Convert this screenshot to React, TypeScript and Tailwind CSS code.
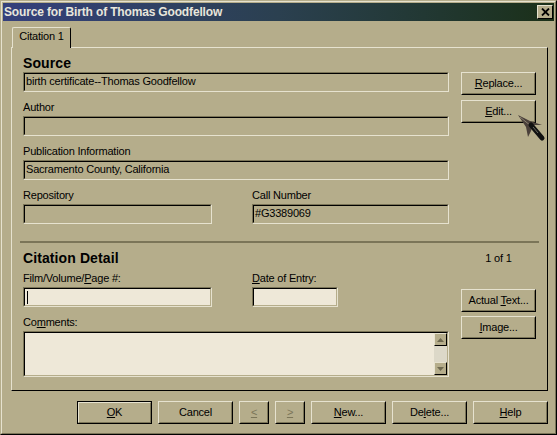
import type { ReactNode } from 'react';

const fontStack = "font-['Liberation_Sans',Arial,sans-serif]";

function Field({ value, light, className, children }: { value?: string; light?: boolean; className?: string; children?: ReactNode }) {
	return (
		<div className={`border border-t-[#7b7558] border-l-[#7b7558] border-b-[#e6e2cf] border-r-[#e6e2cf] ${className}`}>
			<div className={`relative h-full border border-t-black border-l-black border-b-[#b5ad8b] border-r-[#b5ad8b] pl-[1px] text-[11px] leading-[15px] ${light ? 'bg-[#eee8d8]' : ''}`}>
				{value}
				{children}
			</div>
		</div>
	);
}

function Btn({ children, className, isDefault }: { children: ReactNode; className?: string; isDefault?: boolean }) {
	if (isDefault) {
		return (
			<div className={`h-[23px] border border-black ${className}`}>
				<div className="flex h-full items-center justify-center border border-t-[#e6e2cf] border-l-[#e6e2cf] border-b-[#7b7558] border-r-[#7b7558] text-[11px]">{children}</div>
			</div>
		);
	}
	return (
		<div className={`h-[23px] border border-t-[#e6e2cf] border-l-[#e6e2cf] border-b-black border-r-black ${className}`}>
			<div className="flex h-full items-center justify-center border border-transparent border-b-[#7b7558] border-r-[#7b7558] text-[11px]">{children}</div>
		</div>
	);
}

function Label({ children, className }: { children: ReactNode; className?: string }) {
	return <div className={`h-[14px] text-[11px] leading-[14px] mb-[2px] ${className}`}>{children}</div>;
}

function ScrollBtn({ down }: { down?: boolean }) {
	return (
		<div className="flex h-[13px] w-[13px] items-center justify-center border border-t-[#e6e2cf] border-l-[#e6e2cf] border-b-black border-r-black bg-[#b5ad8b]">
			<svg width="7" height="4" viewBox="0 0 7 4">
				<polygon points={down ? '0,0 7,0 3.5,4' : '3.5,0 7,4 0,4'} fill="#6e6950" />
			</svg>
		</div>
	);
}

export default function App() {
	return (
		<div className={`${fontStack} relative h-[435px] w-[557px] overflow-hidden bg-[#b5ad8b] tracking-[-0.2px] text-black`}>
			<div className="h-full border border-b-black border-r-black border-t-[#b5ad8b] border-l-[#b5ad8b]">
				<div className="h-full border border-t-[#e6e2cf] border-l-[#e6e2cf] border-b-[#7b7558] border-r-[#7b7558] p-[1px]">
					{/* title bar */}
					<div className="flex h-[18px] items-center justify-between bg-gradient-to-r from-[#35407c] via-[#2b4050] to-[#1b3018] pl-[1px] pr-[1px]">
						<span className="text-[12px] font-bold tracking-[-0.16px] text-[#e8e6dc]">Source for Birth of Thomas Goodfellow</span>
						<div className="flex h-[14px] w-[16px] items-center justify-center border border-t-[#e6e2cf] border-l-[#e6e2cf] border-b-black border-r-black bg-[#b5ad8b]">
							<svg width="9" height="8" viewBox="0 0 9 8">
								<path d="M1 0.5 L8 7.5 M8 0.5 L1 7.5" stroke="#000" strokeWidth="1.8" />
							</svg>
						</div>
					</div>

					{/* tab strip */}
					<div className="relative z-10 ml-[9px] mt-[6px] flex h-[21px] w-[59px] items-center justify-center rounded-t-[2px] border border-b-0 border-t-[#e6e2cf] border-l-[#e6e2cf] border-r-black bg-[#b5ad8b] pb-[3px] text-[11px]">
						Citation 1
					</div>

					{/* tab page */}
					<div className="-mt-[1px] ml-[8px] h-[344px] w-[537px] border border-t-[#e6e2cf] border-l-[#e6e2cf] border-b-black border-r-black pl-[11px] pt-[7px]">
						<div className="flex">
							<div className="w-[426px]">
								<div className="h-[16px] text-[14px] font-bold leading-[16px] tracking-[0.1px]">Source</div>
								<Field className="mt-[1px] h-[20px]" value="birth certificate--Thomas Goodfellow" />
								<Label className="mt-[8px]">Author</Label>
								<Field className="h-[20px]" />
								<Label className="mt-[8px]">Publication Information</Label>
								<Field className="h-[20px]" value="Sacramento County, California" />
								<div className="mt-[8px] flex gap-[40px]">
									<div className="w-[189px]">
										<Label>Repository</Label>
										<Field className="h-[20px]" />
									</div>
									<div className="w-[197px]">
										<Label>Call Number</Label>
										<Field className="h-[20px]" value="#G3389069" />
									</div>
								</div>
							</div>
							<div className="ml-[12px] w-[75px] pt-[17px]">
								<Btn>
									<span><u>R</u>eplace...</span>
								</Btn>
								<Btn className="mt-[5px]">
									<span><u>E</u>dit...</span>
								</Btn>
							</div>
						</div>

						<div className="-ml-[3px] mt-[17px] h-[2px] w-[519px] border-t border-b border-t-[#7b7558] border-b-[#7b7558]" />

						<div className="mt-[7px] flex">
							<div className="w-[426px]">
								<div className="h-[16px] text-[14px] font-bold leading-[16px] tracking-[0.1px]">Citation Detail</div>
								<div className="mt-[5px] flex gap-[40px]">
									<div className="w-[189px]">
										<Label>Film/Volume/<u>P</u>age #:</Label>
										<Field light className="h-[20px]">
											<div className="absolute left-[2px] top-[2px] h-[13px] w-[1px] bg-black" />
										</Field>
									</div>
									<div className="w-[86px]">
										<Label><u>D</u>ate of Entry:</Label>
										<Field light className="h-[20px]" />
									</div>
								</div>
								<Label className="mt-[8px]">Co<u>m</u>ments:</Label>
								<Field light className="h-[46px]">
									<div className="absolute inset-y-0 right-0 flex w-[13px] flex-col justify-between bg-[#dcd8c8]">
										<ScrollBtn />
										<ScrollBtn down />
									</div>
								</Field>
							</div>
							<div className="ml-[12px] w-[75px]">
								<div className="h-[16px] text-center text-[11px] leading-[16px]">1 of 1</div>
								<Btn className="mt-[23px]">
									<span>Actual <u>T</u>ext...</span>
								</Btn>
								<Btn className="mt-[4px]">
									<span><u>I</u>mage...</span>
								</Btn>
							</div>
						</div>
					</div>

					{/* bottom buttons */}
					<div className="ml-[74px] mt-[10px] flex gap-[6px]">
						<Btn isDefault className="w-[75px]"><span><u>O</u>K</span></Btn>
						<Btn className="w-[75px]">Cancel</Btn>
						<Btn className="w-[30px] text-[#7b7558]"><u className="text-[#7b7558]">&lt;</u></Btn>
						<Btn className="w-[30px] text-[#7b7558]"><u className="text-[#7b7558]">&gt;</u></Btn>
						<Btn className="w-[75px]"><span><u>N</u>ew...</span></Btn>
						<Btn className="w-[75px]"><span>De<u>l</u>ete...</span></Btn>
						<Btn className="w-[75px]"><span><u>H</u>elp</span></Btn>
					</div>
				</div>
			</div>

			{/* mouse pointer, sits over the Edit button */}
			<svg className="absolute left-[516px] top-[113px]" width="30" height="30" viewBox="0 0 30 30">
				<polygon points="2,2 14,8 26,12 18,12 16,15 15,18 12,24 10,14" fill="#4a403a" />
				<path d="M4 4 L15 13" stroke="#8a8070" strokeWidth="1" />
				<path d="M15 12 L26 25" stroke="#111" strokeWidth="5" strokeLinecap="round" />
				<path d="M17 14 L22 20" stroke="#6a6a60" strokeWidth="1" />
			</svg>
		</div>
	);
}
